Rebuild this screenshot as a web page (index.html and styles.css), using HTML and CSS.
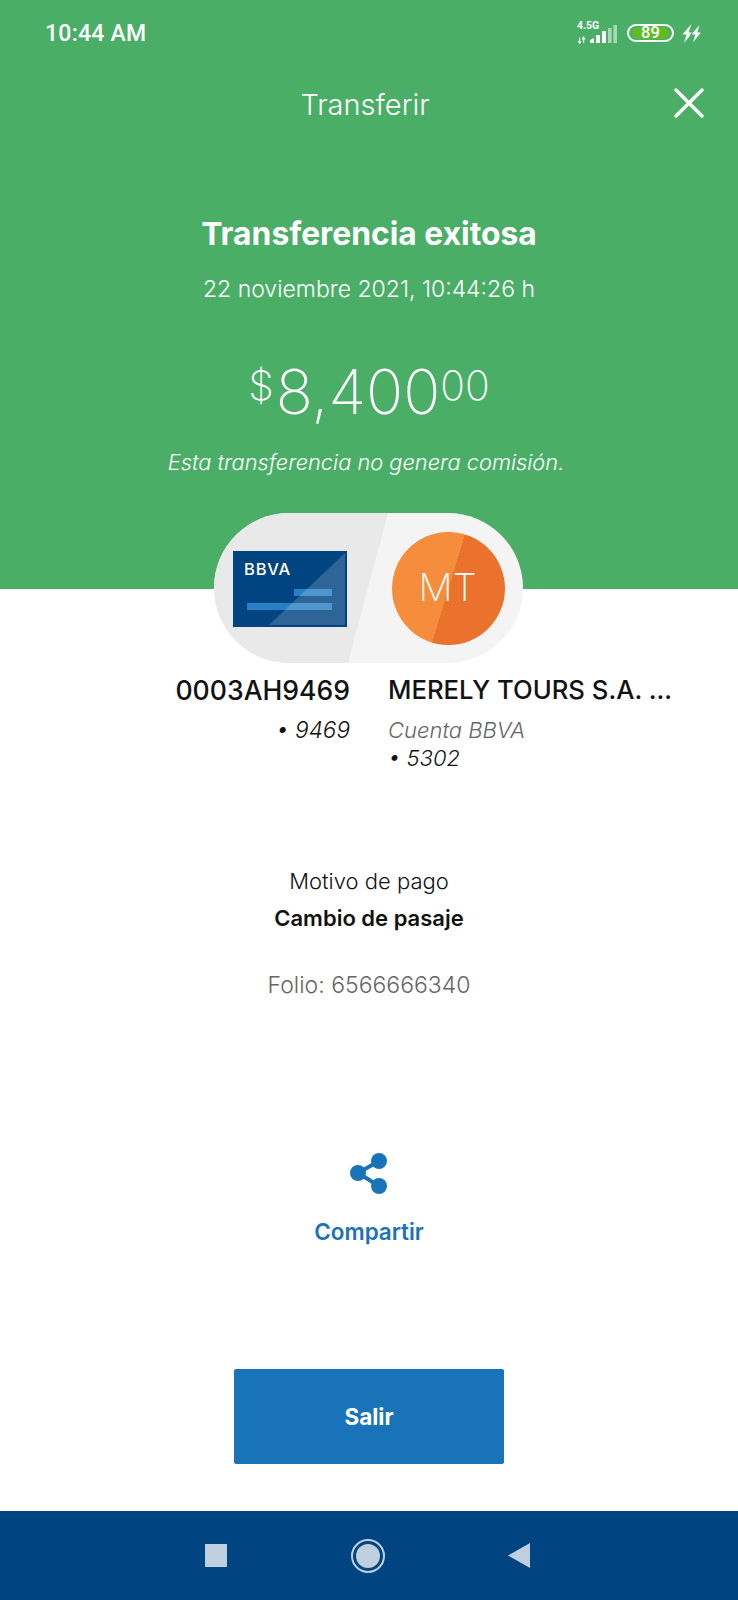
FILE: index.html
```html
<!DOCTYPE html>
<html lang="es">
<head>
<meta charset="utf-8">
<title>Transferir</title>
<link rel="stylesheet" href="styles.css">
</head>
<body>
<div class="screen">
  <header class="hero">
    <div class="status">
      <span class="clock">10:44 AM</span>
      <div class="status-icons">
        <div class="signal">
          <span class="net">4.5G</span>
          <svg class="bars" width="42" height="20" viewBox="0 0 42 20">
            <path d="M2.6 12.5v5.5M1 16l1.6 2.4L4.2 16M6.6 18v-5.5M5 14.5l1.6-2.4 1.6 2.4" stroke="#e6f5ea" stroke-width="1.2" fill="none"/>
            <path d="M13 18v-3l4-2v5z" fill="#fff"/>
            <rect x="19" y="10" width="4" height="8" fill="#fff"/>
            <rect x="25" y="6" width="4" height="12" fill="#fff"/>
            <rect x="31" y="3" width="3.6" height="15" fill="#a9d8b6"/>
            <rect x="36.4" y="0" width="3.6" height="18" fill="#a9d8b6"/>
          </svg>
        </div>
        <div class="battery"><span class="battery-level">89</span></div>
        <svg class="bolt" width="19" height="19" viewBox="0 0 19 19">
          <path d="M9.5 0 .5 10.5h4L2 19l8.5-10.5h-4z" fill="#fff"/>
          <path d="M17.5 1 9.5 10.5h3.8L11 18.5l7.8-10h-3.6z" fill="#fff"/>
          <path d="M10.3 8.8 8.2 11.4" stroke="#4aae67" stroke-width="1.2"/>
        </svg>
      </div>
    </div>
    <div class="titlebar">
      <h1 class="title">Transferir</h1>
      <svg class="close" width="30" height="30" viewBox="0 0 30 30">
        <path d="M2 2 28 28M28 2 2 28" stroke="#fff" stroke-width="3.4" stroke-linecap="round" fill="none"/>
      </svg>
    </div>
    <h2 class="headline">Transferencia exitosa</h2>
    <p class="date">22 noviembre 2021, 10:44:26 h</p>
    <p class="amount"><span class="sup sup-cur">$</span>8,400<span class="sup">00</span></p>
    <p class="note">Esta transferencia no genera comisión.</p>
  </header>

  <main class="body">
    <div class="route">
      <div class="route-slant"></div>
      <svg class="card" width="114" height="76" viewBox="0 0 114 76">
        <rect width="114" height="76" fill="#004481"/>
        <rect x="14" y="52" width="85" height="7" fill="#2a7fc4"/>
        <rect x="61" y="38" width="38" height="7" fill="#2a7fc4"/>
        <path d="M36 74 112 2v72z" fill="#fff" fill-opacity=".18"/>
      </svg>
      <span class="card-brand">BBVA</span>
      <div class="avatar"><span class="avatar-text">MT</span></div>
    </div>

    <div class="parties">
      <div class="party party-from">
        <div class="party-name">0003AH9469</div>
        <div class="party-num">• 9469</div>
      </div>
      <div class="party">
        <div class="party-name">MERELY TOURS S.A. ...</div>
        <div class="party-bank">Cuenta BBVA</div>
        <div class="party-num">• 5302</div>
      </div>
    </div>

    <p class="reason-label">Motivo de pago</p>
    <p class="reason">Cambio de pasaje</p>
    <p class="folio">Folio: 6566666340</p>

    <div class="share">
      <svg width="40" height="42" viewBox="0 0 40 42">
        <path d="M30 9 9 21l21 13" stroke="#1973b8" stroke-width="4" fill="none"/>
        <circle cx="30" cy="9" r="8" fill="#1973b8"/>
        <circle cx="9" cy="21" r="8" fill="#1973b8"/>
        <circle cx="30" cy="34" r="8" fill="#1973b8"/>
      </svg>
      <span class="share-label">Compartir</span>
    </div>

    <button class="exit">Salir</button>
  </main>

  <nav class="navbar">
    <span class="nav-square"></span>
    <span class="nav-home"><span class="nav-home-dot"></span></span>
    <svg width="22" height="25" viewBox="0 0 22 25"><path d="M22 0v25L0 12.5z" fill="#c0cfdf"/></svg>
  </nav>
</div>
</body>
</html>
```
FILE: styles.css
```css
* { box-sizing: border-box; }
html, body { margin: 0; padding: 0; }
body { font-family: Inter, "Open Sans", sans-serif; background: #fff; color: #121212; }
p, h1, h2 { margin: 0; font-weight: normal; }

.screen { width: 738px; height: 1600px; display: flex; flex-direction: column; overflow: hidden; }

/* Green summary header */
.hero { height: 589px; background: #4aae67; color: #fff; text-align: center; flex: none; }
.status { height: 66px; padding: 0 37px 0 45px; display: flex; justify-content: space-between; align-items: center; }
.clock { font-family: Roboto, sans-serif; font-weight: 500; font-size: 23px; letter-spacing: .25px; }
.status-icons { display: flex; align-items: center; }
.signal { position: relative; width: 42px; height: 22px; margin-right: 10px; left: 2px; }
.net { position: absolute; left: 0; top: -1px; font-family: Roboto, sans-serif; font-weight: 700; font-size: 10.5px; line-height: 10px; }
.bars { position: absolute; left: 0; top: 3px; }
.battery { width: 47px; height: 18px; border: 2px solid #fff; border-radius: 9px; padding: 1px 3px; margin-right: 8px; }
.battery-level { display: block; height: 12px; background: #5fbc21; border-radius: 6px; font-family: Roboto, sans-serif; font-weight: 500; font-size: 16.5px; line-height: 12px; text-align: center; }
.titlebar { position: relative; height: 72px; margin-top: 2px; padding-right: 8px; display: flex; align-items: center; justify-content: center; }
.title { font-weight: 300; font-size: 29px; }
.close { position: absolute; right: 34px; top: 20px; }
.headline { margin-top: 74px; font-weight: 700; font-size: 31.8px; line-height: 40px; }
.date { margin-top: 20px; font-weight: 300; font-size: 23px; line-height: 30px; }
.amount { margin-top: 50px; font-weight: 200; font-size: 61.5px; line-height: 76px; }
.sup { font-size: 41px; vertical-align: 14px; line-height: 0; }
.sup-cur { margin-right: 2px; }
.note { margin-top: 17px; padding-right: 6px; font-style: italic; font-weight: 300; font-size: 21.8px; line-height: 30px; }

/* Account route pill overlapping the header edge */
.body { flex: 1; display: flex; flex-direction: column; align-items: center; min-height: 0; }
.route { position: relative; width: 309px; height: 150px; margin-top: -76px; border-radius: 75px; overflow: hidden; background: #f4f4f4; flex: none; margin-left: -1px; }
.route-slant { position: absolute; inset: 0; background: #e9e9e9; clip-path: polygon(0 0, 174px 0, 134px 100%, 0 100%); }
.card { position: absolute; left: 19px; top: 38px; }
.card-brand { position: absolute; left: 30px; top: 47px; font-family: Inter, sans-serif; font-size: 16.5px; line-height: 18px; font-weight: 500; color: #fff; letter-spacing: .8px; }
.avatar { position: absolute; left: 178px; top: 19px; width: 113px; height: 113px; border-radius: 50%; overflow: hidden; background: linear-gradient(107deg, #f68d3c 0 50%, #ea722c 50% 100%); display: flex; align-items: center; justify-content: center; }
.avatar-text { color: #fff; font-weight: 200; font-size: 38px; position: relative; top: -2px; left: -1px; }

.parties { width: 100%; display: grid; grid-template-columns: 1fr 1fr; column-gap: 38px; margin-top: 10px; }
.party-from { text-align: right; }
.party-name { font-weight: 500; font-size: 25.7px; line-height: 34px; white-space: nowrap; }
.party-from .party-name { font-size: 26.6px; }
.party-num { font-style: italic; font-weight: 300; font-size: 22px; line-height: 28px; }
.party-bank { font-style: italic; font-weight: 300; font-size: 22px; line-height: 28px; color: #666; margin-top: 9px; }
.party-from .party-num { margin-top: 9px; font-size: 22.6px; }

.reason-label { margin-top: 94px; font-weight: 300; font-size: 22px; line-height: 30px; }
.reason { margin-top: 7px; font-weight: 600; font-size: 22px; line-height: 30px; }
.folio { margin-top: 37px; font-weight: 300; font-size: 23px; line-height: 30px; color: #666; }

.share { margin-top: 152px; display: flex; flex-direction: column; align-items: center; gap: 24px; }
.share-label { color: #1973b8; font-weight: 600; font-size: 22.4px; line-height: 28px; }
.exit { margin-top: 123px; width: 270px; height: 95px; border: 0; border-radius: 2px; background: #1973b8; color: #fff; font-family: inherit; font-weight: 700; font-size: 22.5px; }

/* Android navigation bar */
.navbar { height: 89px; background: #004481; flex: none; display: flex; align-items: center; padding: 0 208px 0 205px; justify-content: space-between; }
.nav-square { width: 22px; height: 23px; background: #c0cfdf; }
.nav-home { width: 34px; height: 34px; border-radius: 50%; border: 2.5px solid #c0cfdf; display: flex; align-items: center; justify-content: center; }
.nav-home-dot { width: 24px; height: 24px; border-radius: 50%; background: #c0cfdf; }
```
